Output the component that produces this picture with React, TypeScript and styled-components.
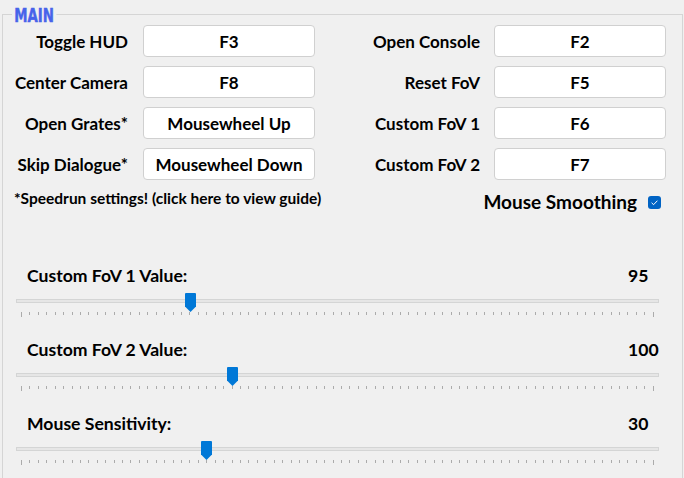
import React from 'react'
import styled, { createGlobalStyle } from 'styled-components'

const GlobalStyle = createGlobalStyle`
  * { box-sizing: border-box; }
  html, body {
    margin: 0;
    padding: 0;
    background: #f0f0f0;
  }
  body {
    font-family: Lato, "Noto Sans", sans-serif;
    color: #000;
    overflow: hidden;
  }
`

const Window = styled.div`
  width: 684px;
  height: 478px;
  overflow: hidden;
  padding: 14px 1px 0 2px;
`

const Group = styled.section`
  position: relative;
  height: 464px;
  border: 1px solid #d5d5d5;
  border-bottom: none;
`

const GroupTitle = styled.span`
  position: absolute;
  left: 9px;
  top: -10px;
  padding: 0 3px;
  background: #f0f0f0;
  color: #4763ea;
  font-family: "DejaVu Sans Condensed", "DejaVu Sans", sans-serif;
  font-weight: 700;
  font-size: 20px;
  line-height: 20px;
  -webkit-text-stroke: 0.5px #4763ea;
  transform: scaleX(0.74);
  transform-origin: left center;
`

const KeyGrid = styled.div`
  display: grid;
  grid-template-columns: 140px 172px 179px 172px;
  row-gap: 9px;
  align-items: center;
  padding-top: 10px;
`

const KeyLabel = styled.span<{ $gap: number }>`
  text-align: right;
  padding-right: ${p => p.$gap}px;
  font-size: 17px;
  font-weight: 700;
  white-space: nowrap;
`

const KeyButton = styled.button`
  height: 32px;
  display: flex;
  align-items: center;
  justify-content: center;
  padding: 0;
  background: #fff;
  border: 1px solid #d0d0d0;
  border-radius: 4px;
  font-family: inherit;
  font-size: 17px;
  font-weight: 700;
  color: #000;
  white-space: nowrap;
`

const OptionsRow = styled.div`
  display: flex;
  justify-content: space-between;
  align-items: flex-start;
  margin-top: 10px;
  padding: 0 21px 0 11px;
`

const Footnote = styled.span`
  font-size: 15.5px;
  line-height: 17px;
  font-weight: 700;
  cursor: pointer;
`

const Toggle = styled.label`
  display: flex;
  align-items: center;
  gap: 11px;
  margin-top: 1px;
  font-size: 19px;
  line-height: 22px;
  font-weight: 700;
`

const CheckBox = styled.span`
  display: inline-flex;
  width: 13px;
  height: 13px;
  border-radius: 3px;
  background: #0063c4;
`

const Sliders = styled.div`
  display: flex;
  flex-direction: column;
  gap: 23px;
  margin-top: 53px;
  padding: 0 23px 0 13px;
`

const SliderHeader = styled.div`
  display: grid;
  grid-template-columns: 1fr 31px;
  padding-left: 11px;
  font-size: 17.6px;
  line-height: 20px;
  font-weight: 700;
`

const TrackArea = styled.div`
  position: relative;
  height: 19px;
  margin-top: 7px;
  padding-top: 6px;
`

const Rail = styled.div`
  height: 4px;
  background: #e6e6e6;
  border: 1px solid #d4d5d5;
`

const Thumb = styled.svg`
  position: absolute;
  top: 0;
  width: 11px;
  height: 19px;
`

const Ticks = styled.div`
  display: flex;
  justify-content: space-between;
  align-items: flex-start;
  height: 5px;
  padding: 0 5px;
`

const Tick = styled.span<{ $end?: boolean }>`
  width: 1px;
  height: ${p => (p.$end ? 5 : 3)}px;
  background: #ababab;
`

const keys = [
  ['Toggle HUD', 'F3', 'Open Console', 'F2'],
  ['Center Camera', 'F8', 'Reset FoV', 'F5'],
  ['Open Grates*', 'Mousewheel Up', 'Custom FoV 1', 'F6'],
  ['Skip Dialogue*', 'Mousewheel Down', 'Custom FoV 2', 'F7'],
]

const sliders = [
  { label: 'Custom FoV 1 Value:', value: 95, min: 75, max: 150 },
  { label: 'Custom FoV 2 Value:', value: 100, min: 75, max: 150 },
  { label: 'Mouse Sensitivity:', value: 30, min: 1, max: 100 },
]

const TICK_COUNT = 76
const TICK_SPAN = 632

function Slider({ label, value, min, max }: { label: string; value: number; min: number; max: number }) {
  const pos = ((value - min) / (max - min)) * TICK_SPAN
  return (
    <div>
      <SliderHeader>
        <span>{label}</span>
        <span>{value}</span>
      </SliderHeader>
      <TrackArea>
        <Rail />
        <Thumb viewBox="0 0 11 19" style={{ left: pos }}>
          <path d="M1 0 H10 Q11 0 11 1 V13.5 L5.5 19 L0 13.5 V1 Q0 0 1 0 Z" fill="#0078d7" />
        </Thumb>
      </TrackArea>
      <Ticks>
        {Array.from({ length: TICK_COUNT }, (_, i) => (
          <Tick key={i} $end={i === 0 || i === TICK_COUNT - 1} />
        ))}
      </Ticks>
    </div>
  )
}

export default function App() {
  return (
    <>
      <GlobalStyle />
      <Window>
        <Group>
          <GroupTitle>MAIN</GroupTitle>
          <KeyGrid>
            {keys.map(([l1, k1, l2, k2]) => (
              <React.Fragment key={l1}>
                <KeyLabel $gap={15}>{l1}</KeyLabel>
                <KeyButton>{k1}</KeyButton>
                <KeyLabel $gap={14}>{l2}</KeyLabel>
                <KeyButton>{k2}</KeyButton>
              </React.Fragment>
            ))}
          </KeyGrid>
          <OptionsRow>
            <Footnote>*Speedrun settings! (click here to view guide)</Footnote>
            <Toggle>
              Mouse Smoothing
              <CheckBox>
                <svg width="13" height="13" viewBox="0 0 13 13">
                  <path d="M3.6 6.8 L5.6 8.7 L9.4 4.7" fill="none" stroke="#fff" strokeWidth="1" />
                </svg>
              </CheckBox>
            </Toggle>
          </OptionsRow>
          <Sliders>
            {sliders.map(s => (
              <Slider key={s.label} {...s} />
            ))}
          </Sliders>
        </Group>
      </Window>
    </>
  )
}
